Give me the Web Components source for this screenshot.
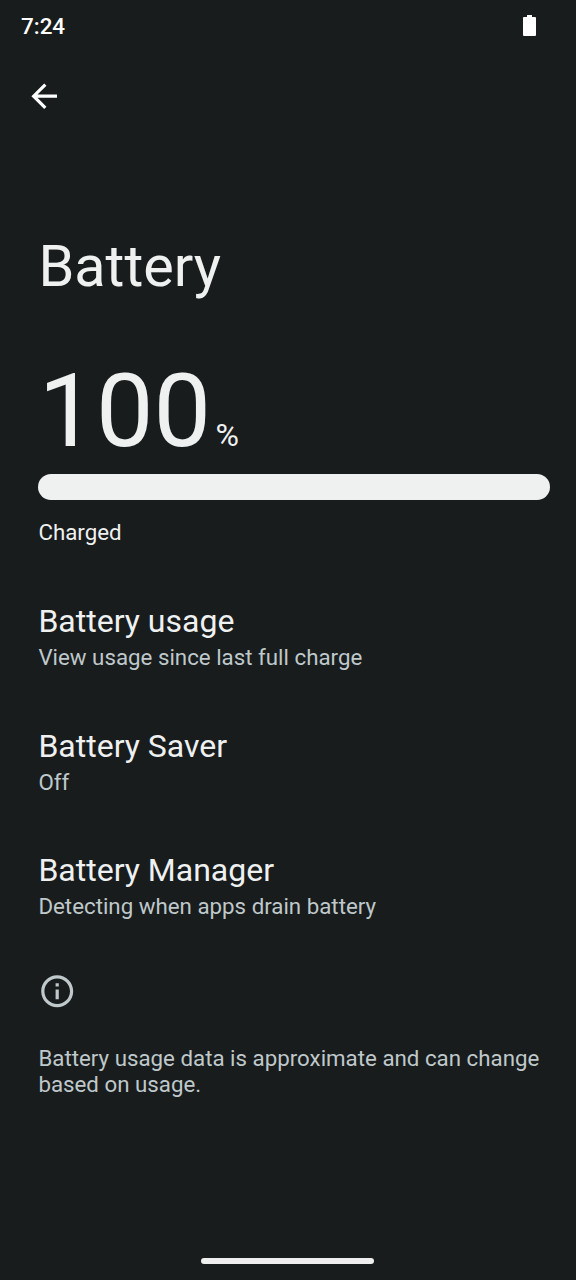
<!DOCTYPE html>
<html lang="en"><head><meta charset="utf-8"><title>Battery</title>
<style>html,body{margin:0;background:#191c1d}</style></head><body>
<battery-screen></battery-screen>
<script>
const define=(name,html)=>customElements.define(name,class extends HTMLElement{
  constructor(){super();const t=document.createElement('template');t.innerHTML=html;this.attachShadow({mode:'open'}).append(t.content.cloneNode(true));}
});
define('status-bar',`<style>
:host{display:flex;justify-content:space-between;height:53px;box-sizing:border-box;padding:12px 39px 0 21px;color:#fff;font-size:22.4px;line-height:28px;font-weight:500}
svg{display:block;margin-top:3px}
</style><slot></slot><svg width="14" height="22" viewBox="0 0 14 22"><path fill="#fff" d="M4 0h5v2h3a1 1 0 0 1 1 1v17a1 1 0 0 1-1 1H1a1 1 0 0 1-1-1V3a1 1 0 0 1 1-1h3z"/></svg>`);
define('nav-back',`<style>:host{display:block;height:180px;box-sizing:border-box;padding:24px 0 0 25.4px}svg{display:block}</style>
<svg width="38.4" height="38.4" viewBox="0 0 24 24"><path fill="#fff" d="M20 11H7.830l5.590-5.590L12 4l-8 8 8 8 1.410-1.410L7.830 13H20v-2z"/></svg>`);
define('battery-level',`<style>
:host{display:block}
.n{display:flex;align-items:baseline;height:118px;line-height:118px;font-size:102.4px;color:#eff1f1}
.p{font-size:32px;margin-left:4.4px}
.bar{height:25.6px;border-radius:13px;background:#eff1f1;margin-top:4.4px}
.s{font-size:22.3px;line-height:26px;margin-top:19px;color:#eff1f1}
</style><div class="n"><slot></slot><span class="p">%</span></div><div class="bar"></div><div class="s"><slot name="status"></slot></div>`);
define('pref-item',`<style>
:host{display:block;height:124.8px}
.t{font-size:32px;line-height:38px;color:#eff1f1}
.s{font-size:22.3px;line-height:26px;margin-top:4px;color:#bfc8ca}
</style><div class="t"><slot></slot></div><div class="s"><slot name="summary"></slot></div>`);
define('info-footer',`<style>
:host{display:block;font-size:22.3px;line-height:26.25px;color:#bfc8ca}
svg{display:block;margin-bottom:35px}
</style><svg width="38.4" height="38.4" viewBox="0 0 24 24"><path fill="#bfc8ca" d="M11 7h2v2h-2zm0 4h2v6h-2zm1-9C6.480 2 2 6.480 2 12s4.480 10 10 10 10-4.480 10-10S17.520 2 12 2zm0 18c-4.410 0-8-3.590-8-8s3.590-8 8-8 8 3.590 8 8-3.590 8-8 8z"/></svg><slot></slot>`);
define('gesture-bar',`<style>:host{display:block;width:173px;height:6.4px;border-radius:3.2px;background:#eee;margin:auto auto 16px 201.400px}</style>`);
define('battery-screen',`<style>
:host{display:flex;flex-direction:column;width:576px;height:1280px;overflow:hidden;background:#191c1d;font-family:Roboto,sans-serif}
main{padding:0 25.6px 0 38.4px}
h1{margin:0;font-weight:400;font-size:57.6px;line-height:68px;color:#eff1f1}
battery-level{margin-top:51px;margin-bottom:56.8px}
info-footer{margin-top:-4.4px}
</style><status-bar>7:24</status-bar><nav-back></nav-back><main><h1>Battery</h1>
<battery-level>100<span slot="status">Charged</span></battery-level>
<pref-item>Battery usage<span slot="summary">View usage since last full charge</span></pref-item>
<pref-item>Battery Saver<span slot="summary">Off</span></pref-item>
<pref-item>Battery Manager<span slot="summary">Detecting when apps drain battery</span></pref-item>
<info-footer>Battery usage data is approximate and can change based on usage.</info-footer></main><gesture-bar></gesture-bar>`);
</script></body></html>
